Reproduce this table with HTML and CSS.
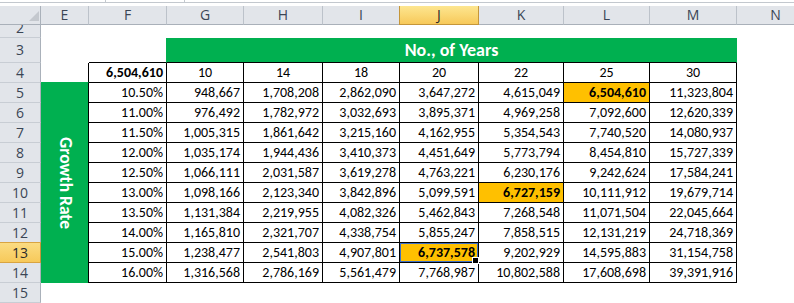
FILE: index.html
```html
<!DOCTYPE html>
<html lang="en">
<head>
    <meta charset="UTF-8">
    <meta name="viewport" content="width=device-width, initial-scale=1.0">
    <title>Growth Table</title>
    <link rel="stylesheet" href="styles.css">
</head>
<body>
<div class="chrome">
    <div class="fx"><span class="seg a"></span><span class="seg b"></span></div>
</div>

<div class="sheet">
    <!-- column headers -->
    <div class="corner"></div>
    <div class="ch">E</div>
    <div class="ch">F</div>
    <div class="ch">G</div>
    <div class="ch">H</div>
    <div class="ch">I</div>
    <div class="ch on">J</div>
    <div class="ch">K</div>
    <div class="ch">L</div>
    <div class="ch">M</div>
    <div class="ch">N</div>

    <!-- row 2 (scrolled) -->
    <div class="rh cut">2</div>

    <!-- row 3 -->
    <div class="rh">3</div>
    <div></div>
    <div class="lead"></div>
    <div class="title">No., of Years</div>

    <!-- row 4 -->
    <div class="rh">4</div>
    <div class="edge"></div>
    <div class="c b">6,504,610</div>
    <div class="c hd">10</div>
    <div class="c hd">14</div>
    <div class="c hd">18</div>
    <div class="c hd">20</div>
    <div class="c hd">22</div>
    <div class="c hd">25</div>
    <div class="c hd">30</div>

    <div class="rh">5</div>
    <div class="side">Growth Rate</div>
    <div class="c">10.50%</div>
    <div class="c">948,667</div>
    <div class="c">1,708,208</div>
    <div class="c">2,862,090</div>
    <div class="c">3,647,272</div>
    <div class="c">4,615,049</div>
    <div class="c hi b">6,504,610</div>
    <div class="c">11,323,804</div>

    <div class="rh">6</div>
    <div class="c">11.00%</div>
    <div class="c">976,492</div>
    <div class="c">1,782,972</div>
    <div class="c">3,032,693</div>
    <div class="c">3,895,371</div>
    <div class="c">4,969,258</div>
    <div class="c">7,092,600</div>
    <div class="c">12,620,339</div>

    <div class="rh">7</div>
    <div class="c">11.50%</div>
    <div class="c">1,005,315</div>
    <div class="c">1,861,642</div>
    <div class="c">3,215,160</div>
    <div class="c">4,162,955</div>
    <div class="c">5,354,543</div>
    <div class="c">7,740,520</div>
    <div class="c">14,080,937</div>

    <div class="rh">8</div>
    <div class="c">12.00%</div>
    <div class="c">1,035,174</div>
    <div class="c">1,944,436</div>
    <div class="c">3,410,373</div>
    <div class="c">4,451,649</div>
    <div class="c">5,773,794</div>
    <div class="c">8,454,810</div>
    <div class="c">15,727,339</div>

    <div class="rh">9</div>
    <div class="c">12.50%</div>
    <div class="c">1,066,111</div>
    <div class="c">2,031,587</div>
    <div class="c">3,619,278</div>
    <div class="c">4,763,221</div>
    <div class="c">6,230,176</div>
    <div class="c">9,242,624</div>
    <div class="c">17,584,241</div>

    <div class="rh">10</div>
    <div class="c">13.00%</div>
    <div class="c">1,098,166</div>
    <div class="c">2,123,340</div>
    <div class="c">3,842,896</div>
    <div class="c">5,099,591</div>
    <div class="c hi b">6,727,159</div>
    <div class="c">10,111,912</div>
    <div class="c">19,679,714</div>

    <div class="rh">11</div>
    <div class="c">13.50%</div>
    <div class="c">1,131,384</div>
    <div class="c">2,219,955</div>
    <div class="c">4,082,326</div>
    <div class="c">5,462,843</div>
    <div class="c">7,268,548</div>
    <div class="c">11,071,504</div>
    <div class="c">22,045,664</div>

    <div class="rh">12</div>
    <div class="c">14.00%</div>
    <div class="c">1,165,810</div>
    <div class="c">2,321,707</div>
    <div class="c">4,338,754</div>
    <div class="c">5,855,247</div>
    <div class="c">7,858,515</div>
    <div class="c">12,131,219</div>
    <div class="c">24,718,369</div>

    <div class="rh on">13</div>
    <div class="c">15.00%</div>
    <div class="c">1,238,477</div>
    <div class="c">2,541,803</div>
    <div class="c">4,907,801</div>
    <div class="c hi b sel">6,737,578</div>
    <div class="c">9,202,929</div>
    <div class="c">14,595,883</div>
    <div class="c">31,154,758</div>

    <div class="rh">14</div>
    <div class="c">16.00%</div>
    <div class="c">1,316,568</div>
    <div class="c">2,786,169</div>
    <div class="c">5,561,479</div>
    <div class="c">7,768,987</div>
    <div class="c">10,802,588</div>
    <div class="c">17,608,698</div>
    <div class="c">39,391,916</div>

    <div class="rh">15</div>
</div>
</body>
</html>
```

FILE: styles.css
```css
body {
    margin: 0;
    background-color: #fff;
    overflow: hidden;
    font-family: Calibri, Carlito, Lato, sans-serif;
}

.chrome {
    height: 6px;
}

.fx {
    display: flex;
    height: 2px;
    border-bottom: 1px solid #c3c8ce;
}

.seg {
    border-right: 1px solid #c3c8ce;
}

.seg.a {
    width: 105px;
}

.seg.b {
    width: 78px;
}

.sheet {
    display: grid;
    grid-template-columns: 41px 48px 78px 77px 79px 77px 79px 85px 86px 87px 78px;
    grid-template-rows: 19px 13px 25px repeat(12, 20px);
}

.sheet > div {
    box-sizing: border-box;
    min-width: 0;
}

/* headers */
.corner,
.ch,
.rh {
    background-color: #e2e5ea;
    color: #3a4555;
    font-family: "Open Sans", sans-serif;
    font-size: 14px;
    line-height: 18px;
    display: flex;
    align-items: center;
    justify-content: center;
}

.corner {
    border-right: 1px solid #aab1ba;
    border-bottom: 1px solid #a9b0b9;
    align-items: flex-end;
    justify-content: flex-end;
    padding: 0 1px 3px 0;
}

.corner::after {
    content: "";
    width: 10px;
    height: 10px;
    background-color: #c4c8ce;
    clip-path: polygon(100% 0, 100% 100%, 0 100%);
}

.ch {
    border-right: 1px solid #bcc2ca;
    border-bottom: 1px solid #a9b0b9;
}

.rh {
    grid-column: 1;
    border-right: 1px solid #aab1ba;
    border-bottom: 1px solid #c8cdd4;
}

.rh.cut {
    align-items: flex-end;
    overflow: hidden;
}

.ch.on {
    background: linear-gradient(#fde690, #f7c95a);
    border-right-color: #c5963a;
    border-bottom-color: #c5963a;
    box-shadow: -1px 0 0 #c5963a;
    color: #2a2a2a;
}

.rh.on {
    background: linear-gradient(#fbdc82, #f7c95a);
    border-right-color: #c5963a;
    border-bottom-color: #d9a441;
    box-shadow: 0 -1px 0 #d9a441;
    color: #2a2a2a;
}

/* merged green blocks */
.lead {
    border-right: 1px solid #00b050;
    border-bottom: 1px solid #000;
}

.title {
    grid-column: span 7;
    background-color: #00b050;
    border-right: 1px solid #00b050;
    border-bottom: 1px solid #000;
    color: #fff;
    font-weight: bold;
    font-size: 18px;
    display: flex;
    align-items: center;
    justify-content: center;
}

.edge {
    border-right: 1px solid #000;
    border-bottom: 1px solid #00b050;
}

.side {
    grid-row: span 10;
    background-color: #00b050;
    border-right: 1px solid #000;
    color: #fff;
    font-weight: bold;
    font-size: 17.5px;
    writing-mode: vertical-rl;
    display: flex;
    align-items: center;
    justify-content: center;
    padding-left: 3px;
}

/* data cells */
.c {
    border-right: 1px solid #000;
    border-bottom: 1px solid #000;
    color: #000;
    font-size: 14px;
    line-height: 19px;
    text-align: right;
    padding-right: 3px;
    white-space: nowrap;
}

.c.hd {
    text-align: center;
    padding-right: 0;
}

.b {
    font-weight: bold;
}

.hi {
    background-color: #ffc000;
}

.sel {
    position: relative;
    box-shadow: inset 0 0 0 1px #3d6fc6;
}

.sel::after {
    content: "";
    position: absolute;
    right: -1px;
    bottom: -2px;
    width: 5px;
    height: 5px;
    background-color: #000;
    border: 1px solid #fff;
    z-index: 1;
}
```
